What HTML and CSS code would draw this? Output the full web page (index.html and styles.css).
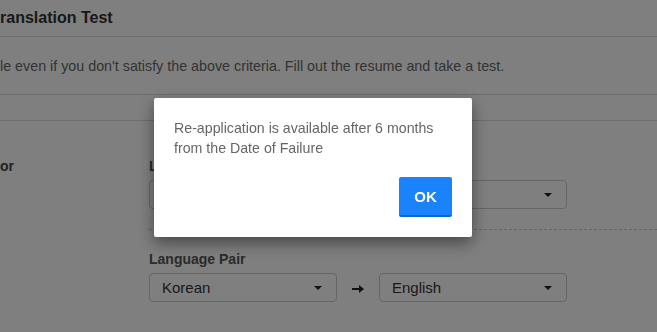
FILE: index.html
```html
<!DOCTYPE html>
<html lang="en">
<head>
  <meta charset="UTF-8" />
  <meta name="viewport" content="width=device-width, initial-scale=1.0" />
  <title>Translation Test</title>
  <link rel="stylesheet" href="styles.css">
</head>
<body>
  <div class="page">
    <div class="title-bar">
      <h2>ranslation Test</h2>
    </div>

    <div class="notice">
      <p>le even if you don't satisfy the above criteria. Fill out the resume and take a test.</p>
    </div>

    <div class="spacer-bar"></div>

    <div class="form-row">
      <div class="row-label">or</div>
      <div class="row-fields">
        <div class="field">
          <label>Language Level</label>
          <div class="select wide"><span>Select</span><i class="caret"></i></div>
        </div>
        <div class="field dashed">
          <label>Language Pair</label>
          <div class="pair">
            <div class="select"><span>Korean</span><i class="caret"></i></div>
            <svg class="arrow" width="12" height="8" viewBox="0 0 12 8">
              <path d="M0 4h8" stroke="#222" stroke-width="2"/>
              <path d="M7 0l5 4-5 4z" fill="#222"/>
            </svg>
            <div class="select"><span>English</span><i class="caret"></i></div>
          </div>
        </div>
      </div>
    </div>
  </div>

  <div class="backdrop"></div>

  <div class="modal">
    <p>Re-application is available after 6 months<br>from the Date of Failure</p>
    <div class="modal-actions">
      <button>OK</button>
    </div>
  </div>
</body>
</html>
```

FILE: styles.css
```css
body {
  font-family: 'Liberation Sans', Arial, sans-serif;
  margin: 0;
  padding: 0;
  background: #fff;
  color: #333;
  overflow: hidden;
}

.page {
  width: 657px;
}

.title-bar {
  height: 36px;
  border-bottom: 1px solid #dadada;
  display: flex;
  align-items: center;
}

.title-bar h2 {
  margin: 0;
  font-size: 16px;
  font-weight: bold;
  color: #333;
}

.notice {
  height: 57px;
  border-bottom: 1px solid #dadada;
  display: flex;
  align-items: center;
}

.notice p {
  margin: 0;
  font-size: 14.3px;
  color: #666;
}

.spacer-bar {
  height: 25px;
  border-bottom: 1px solid #dadada;
}

.form-row {
  display: flex;
  padding-top: 37px;
}

.row-label {
  width: 149px;
  font-size: 14px;
  font-weight: bold;
  color: #444;
  line-height: 16px;
}

.row-fields {
  flex: 1;
}

.field label {
  display: block;
  font-size: 14px;
  font-weight: bold;
  color: #555;
  line-height: 16px;
  margin-bottom: 6px;
}

.field.dashed {
  margin-top: 20px;
  padding-top: 21px;
  border-top: 1px dashed #ccc;
}

.select {
  box-sizing: border-box;
  height: 29px;
  width: 188px;
  border: 1px solid #ccc;
  border-radius: 4px;
  padding: 0 12px;
  display: flex;
  align-items: center;
  justify-content: space-between;
  font-size: 15px;
  color: #333;
}

.select.wide {
  width: 418px;
}

.caret {
  width: 0;
  height: 0;
  border-left: 4px solid transparent;
  border-right: 4px solid transparent;
  border-top: 4px solid #222;
  margin-right: 2px;
}

.pair {
  display: flex;
  align-items: center;
}

.arrow {
  margin: 2px 15px 0 15px;
}

.backdrop {
  position: fixed;
  inset: 0;
  background: rgba(0, 0, 0, 0.5);
}

.modal {
  position: fixed;
  left: 154px;
  top: 98px;
  width: 318px;
  height: 139px;
  box-sizing: border-box;
  background: #fff;
  border-radius: 2px;
  box-shadow: 0 6px 16px rgba(0, 0, 0, 0.45);
  padding: 20px;
  display: flex;
  flex-direction: column;
  justify-content: space-between;
}

.modal p {
  margin: 0;
  font-size: 14.2px;
  line-height: 20px;
  color: #666;
}

.modal-actions {
  display: flex;
  justify-content: flex-end;
}

.modal-actions button {
  width: 53px;
  height: 40px;
  background: #1a82fb;
  color: #fff;
  border: none;
  border-bottom: 2px solid #0b67d9;
  border-radius: 2px;
  font-family: 'Liberation Sans', Arial, sans-serif;
  font-size: 15px;
  font-weight: bold;
  padding: 0;
}
```
